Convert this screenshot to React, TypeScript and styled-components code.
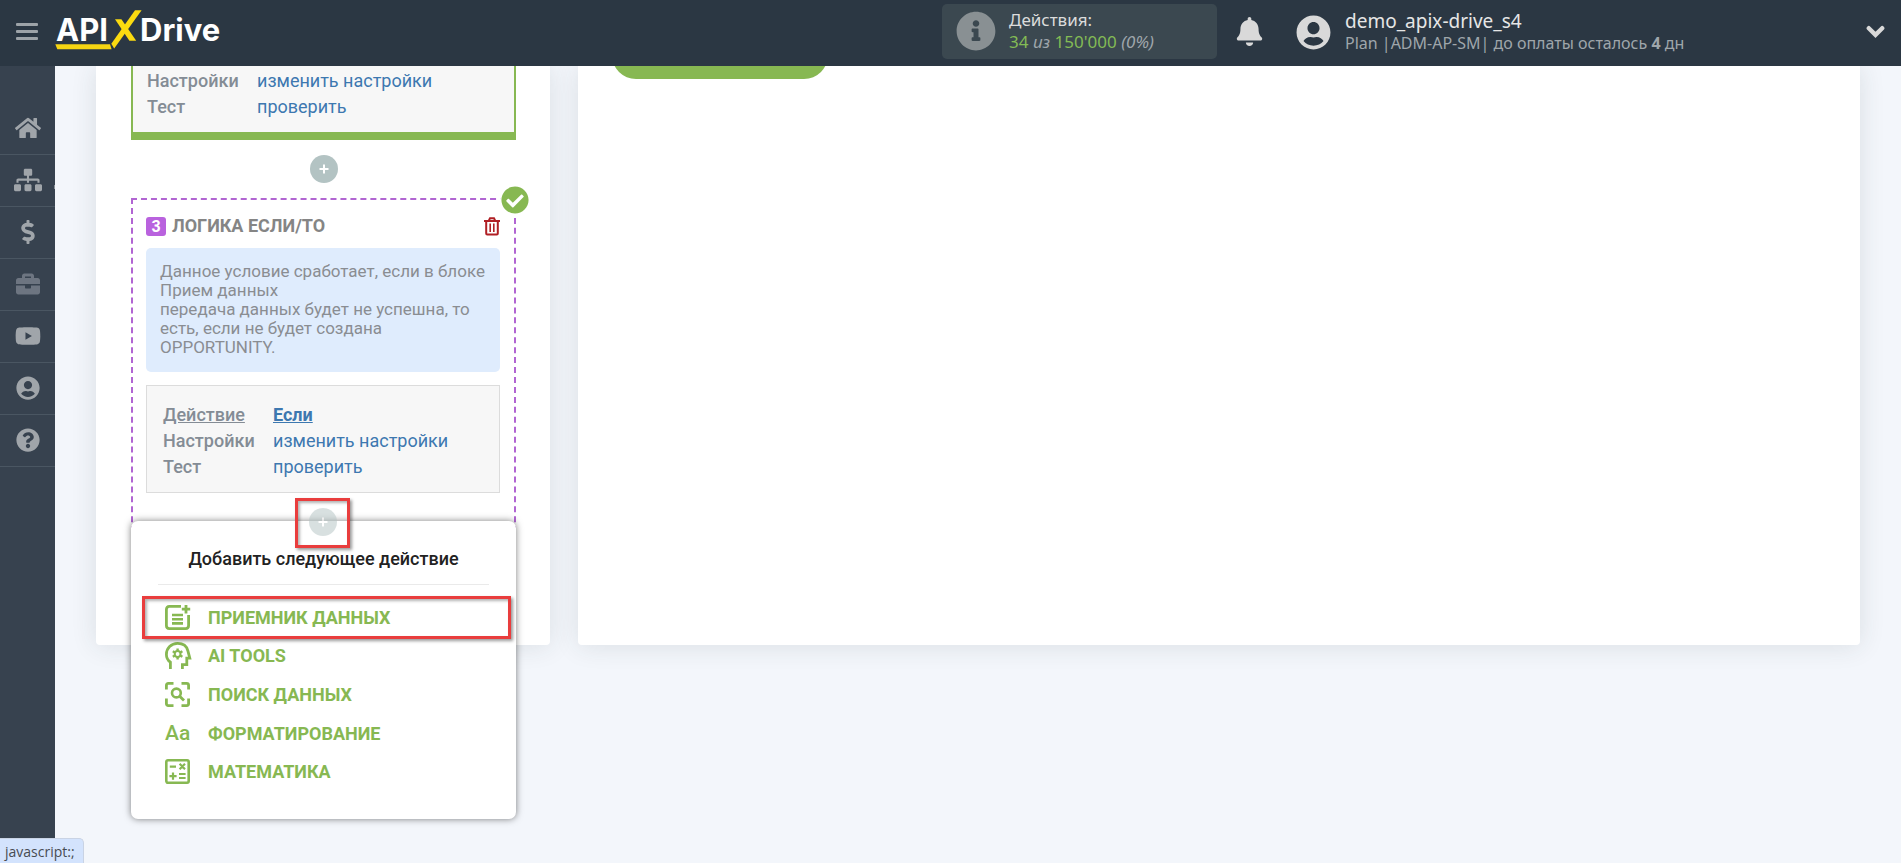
import React from 'react';
import styled, { createGlobalStyle, css } from 'styled-components';
import {
  FaHome, FaSitemap, FaDollarSign, FaBriefcase, FaYoutube, FaUserCircle,
  FaQuestionCircle, FaInfoCircle, FaBell, FaCheckCircle,
} from 'react-icons/fa';

const green = '#87b852';
const linkBlue = '#3d78b0';
const purple = '#b165d2';

const GlobalStyle = createGlobalStyle`
  *, *::before, *::after { box-sizing: border-box; }
  body { margin: 0; background: #f3f6fb; font-family: Roboto, "Liberation Sans", sans-serif; }
  button { font: inherit; border: 0; padding: 0; margin: 0; background: none; cursor: pointer; }
  a { color: inherit; text-decoration: none; }
  h2, h3, p, ul, dl, dd, dt { margin: 0; padding: 0; }
  svg { display: block; flex: none; }
`;

const Page = styled.div`
  min-height: 100vh;
  display: flex;
  flex-direction: column;
`;

/* ---------- top bar ---------- */
const TopBar = styled.header`
  height: 66px;
  flex: none;
  display: flex;
  align-items: center;
  background: #2b3743;
  padding: 0 16px 3px;
  font-family: "Noto Sans", "Open Sans", sans-serif;
  color: #dcdcdc;
`;
const MenuButton = styled.button`
  color: #9da3a8;
  width: 22px;
  height: 24px;
  display: flex;
  flex-direction: column;
  justify-content: center;
  gap: 4px;
`;
const MenuLine = styled.span`
  height: 3px;
  border-radius: 1px;
  background: currentColor;
`;
const LogoLink = styled.a`
  margin-left: 16px;
`;
const TopRight = styled.div`
  margin-left: auto;
  flex: 0 0 943px;
  display: flex;
  align-items: center;
`;
const ActionsBox = styled.div`
  width: 275px;
  height: 55px;
  border-radius: 5px;
  background: #3b4850;
  display: flex;
  align-items: center;
  gap: 13px;
  padding: 0 14px 2px;
`;
const TwoLines = styled.div`
  display: flex;
  flex-direction: column;
  white-space: nowrap;
  line-height: 22px;
`;
const ActionsLabel = styled.div`
  font-size: 17px;
`;
const ActionsCount = styled.div`
  font-size: 17px;
  color: #9fa6ab;
`;
const UserName = styled.div`
  font-size: 19px;
`;
const UserPlan = styled.div`
  font-size: 16px;
  color: #9fa6ab;
`;
const GreenNum = styled.span`
  color: #83bb55;
`;
const IconButton = styled.button`
  margin-left: 18px;
  color: #d9d9d9;
`;
const ExpandButton = styled(IconButton)`
  margin-left: auto;
`;
const User = styled.a`
  margin-left: 32px;
  padding-top: 1px;
  display: flex;
  align-items: center;
  gap: 14px;
  color: #e6e6e6;
`;

/* ---------- body ---------- */
const Body = styled.div`
  flex: 1;
  display: flex;
`;
const SideBar = styled.nav`
  width: 55px;
  flex: none;
  background: #37424f;
  padding-top: 37px;
`;
const SideItem = styled.a<{ $dim?: boolean; $more?: boolean }>`
  position: relative;
  height: 52px;
  padding-bottom: 2px;
  display: flex;
  align-items: center;
  justify-content: center;
  border-bottom: 1px solid #4a5662;
  color: ${p => (p.$dim ? '#6d7581' : '#a0a5aa')};
  ${p => p.$more && css`
    &::after {
      content: '';
      position: absolute;
      right: 0;
      top: 30px;
      width: 1px;
      height: 4px;
      background: #8b9298;
    }
  `}
`;
const Main = styled.main`
  flex: 1;
  display: flex;
  align-items: flex-start;
  gap: 28px;
  padding: 0 41px;
  overflow: hidden;
`;
const cardLook = css`
  background: #fff;
  border-radius: 0 0 4px 4px;
  box-shadow: 0 1px 26px rgba(40, 60, 60, 0.12);
  min-height: 579px;
`;
const StepsCard = styled.section`
  ${cardLook}
  flex: 0 0 454px;
  padding: 0 34px 0 35px;
`;
const WorkCard = styled.section`
  ${cardLook}
  flex: 1;
  padding: 0 34px;
`;
const ButtonClip = styled.div`
  height: 13px;
  overflow: hidden;
  display: flex;
  align-items: flex-end;
`;
const PillButton = styled.button`
  flex: none;
  width: 216px;
  height: 48px;
  border-radius: 24px;
  background: ${green};
`;

const DoneStep = styled.div`
  background: #f7f7f7;
  border: solid ${green};
  border-width: 0 2px 8px;
  padding: 2px 14px 12px;
`;
const Rows = styled.dl`
  font-size: 18px;
  line-height: 26px;
`;
const Row = styled.div<{ $active?: boolean }>`
  display: flex;
  dt {
    width: 110px;
    color: #848c95;
    font-weight: 500;
  }
  dd { color: ${linkBlue}; }
  ${p => p.$active && css`
    dt, a { text-decoration: underline; }
    dd { font-weight: 700; }
  `}
`;
const Connector = styled.div`
  height: 58px;
  display: flex;
  align-items: center;
  justify-content: center;
`;
const PlusButton = styled.button<{ $faded?: boolean }>`
  width: 28px;
  height: 28px;
  border-radius: 50%;
  background: #b3c3c3;
  color: #fff;
  display: flex;
  align-items: center;
  justify-content: center;
  ${p => p.$faded && css`
    position: relative;
    z-index: 2;
    opacity: 0.5;
  `}
`;
const LogicStep = styled.div`
  position: relative;
  border: 2px dashed ${purple};
  padding: 16px 14px 24px 13px;
`;
const DoneMark = styled.span`
  position: absolute;
  top: -15px;
  right: -16px;
  width: 30px;
  height: 30px;
  border-radius: 50%;
  background: #fff;
  color: ${green};
  display: flex;
  align-items: center;
  justify-content: center;
`;
const StepHead = styled.div`
  display: flex;
  align-items: center;
  height: 20px;
  margin-bottom: 12px;
`;
const StepNo = styled.span`
  width: 20px;
  height: 19px;
  border-radius: 3px;
  background: #b962de;
  color: #fff;
  font-size: 16px;
  line-height: 19px;
  font-weight: 700;
  text-align: center;
`;
const StepTitle = styled.h2`
  flex: 1;
  margin-left: 6px;
  font-size: 18px;
  line-height: 22px;
  font-weight: 700;
  color: #858585;
`;
const TrashButton = styled.button`
  color: #b01f24;
`;
const Note = styled.p`
  background: #dfecfd;
  border-radius: 5px;
  padding: 14px 15px 15px 14px;
  font-size: 17px;
  line-height: 19px;
  color: #8a8d92;
`;
const StepParams = styled.div`
  margin-top: 13px;
  background: #f7f7f7;
  border: 1px solid #dcdcdc;
  padding: 16px 16px 12px;
`;
const AddStep = styled.div`
  position: relative;
  margin-top: 15px;
  display: flex;
  justify-content: center;
`;
const Popup = styled.div`
  position: absolute;
  z-index: 1;
  top: 13px;
  left: -15px;
  right: -16px;
  background: #fff;
  border-radius: 7px;
  box-shadow: 0 0 7px rgba(0, 0, 0, 0.5);
  padding: 27px 27px 28px;
`;
const PopupTitle = styled.h3`
  font-size: 18px;
  line-height: 22px;
  font-weight: 500;
  text-align: center;
  color: #222;
  padding-bottom: 14px;
  border-bottom: 1px solid #eaeaea;
`;
const PopupList = styled.ul`
  list-style: none;
  height: 193px;
  margin-top: 13px;
  display: flex;
  flex-direction: column;
`;
const PopupItem = styled.li`
  flex: 1;
  display: flex;
`;
const PopupLink = styled.a`
  flex: 1;
  display: flex;
  align-items: center;
  gap: 16px;
  padding-left: 7px;
  font-size: 18px;
  font-weight: 700;
  color: ${green};
`;
const AaIcon = styled.span`
  width: 27px;
  font-size: 21px;
  line-height: 24px;
  font-weight: 500;
`;
const Highlight = styled.span<{ $kind: 'plus' | 'item' }>`
  position: absolute;
  z-index: 3;
  border: 3px solid #e93d3d;
  box-shadow: 2px 2px 3px rgba(0, 0, 0, 0.4), inset 2px 2px 3px rgba(0, 0, 0, 0.3);
  pointer-events: none;
  ${p => p.$kind === 'plus'
    ? css`top: -10px; left: 149px; width: 55px; height: 50px;`
    : css`top: 75px; left: 11px; right: 5px; height: 43px;`}
`;
const StatusBubble = styled.div`
  position: fixed;
  left: 0;
  bottom: 0;
  height: 25px;
  padding: 0 8px 0 5px;
  border: solid #c9d3e4;
  border-width: 1px 1px 0 0;
  border-radius: 0 5px 0 0;
  background: #d3e3fd;
  color: #474b52;
  font: 14px/25px "Open Sans", "Noto Sans", sans-serif;
`;

/* ---------- drawings ---------- */
const Logo = () => (
  <svg width="170" height="53" viewBox="0 0 170 53" role="img" aria-label="ApiX-Drive">
    <g fontFamily="Inter, sans-serif" fontWeight="700" fontSize="31" fill="#fff">
      <text x="2" y="36">API</text>
      <text x="86" y="36">Drive</text>
    </g>
    <path d="M1.3 39.3H56L57.6 44.3H3.3Z" fill="#f6d512" />
    <path d="M81 5.3H87.6L60.2 43.4L57.3 38.8Z" fill="#fbdb10" />
    <path d="M61 14.3H67.4L82.2 35.8H75.4Z" fill="#fbdb10" />
  </svg>
);
const ChevronIcon = () => (
  <svg width="19" height="13" viewBox="0 0 19 13" fill="none" stroke="currentColor" strokeWidth="4.4" strokeLinecap="round">
    <path d="M2.8 3.2L9.5 9.8L16.2 3.2" />
  </svg>
);
const PlusIcon = () => (
  <svg width="10" height="10" viewBox="0 0 10 10" stroke="currentColor" strokeWidth="2">
    <path d="M5 0.5V9.5M0.5 5H9.5" />
  </svg>
);
const TrashIcon = () => (
  <svg width="16" height="19" viewBox="0 0 16 19" fill="none" stroke="currentColor" strokeWidth="2">
    <path d="M0 4H16M2.2 4V16.6Q2.2 17.6 3.2 17.6H12.8Q13.8 17.6 13.8 16.6V4M4.8 3.6L6 1.2H10L11.2 3.6" />
    <path d="M6.2 6.5V15M9.8 6.5V15" strokeWidth="1.6" />
  </svg>
);
const ItemIcon = ({ children }: { children: React.ReactNode }) => (
  <svg width="27" height="27" viewBox="0 0 27 27" fill="none" stroke="currentColor" strokeWidth="2.8">
    {children}
  </svg>
);
const ReceiverIcon = () => (
  <ItemIcon>
    <path d="M16 2.4H4.4Q1.4 2.4 1.4 5.4V21.6Q1.4 24.6 4.4 24.6H20.6Q23.6 24.6 23.6 21.6V11" />
    <path d="M7 11H18M7 15.2H18M7 19.4H18" strokeWidth="2.6" />
    <path d="M21 1V9.6M16.8 5.2H25.2" strokeWidth="2.8" />
  </ItemIcon>
);
const HeadIcon = () => (
  <ItemIcon>
    <path d="M5.4 27V20.2C3 18.4 1.4 15.8 1.4 12.4C1.4 6.2 6.2 1.4 12.6 1.4C18 1.4 21.8 4.4 22.9 8.8L24.8 16.2H21.8V22.6H17.4V27" />
    <circle cx="12.6" cy="12" r="2.9" strokeWidth="2" />
    <path
      d="M12.6 9V6.4M12.6 15V17.6M15.2 10.5L17.4 9.2M15.2 13.5L17.4 14.8M10 10.5L7.8 9.2M10 13.5L7.8 14.8"
      strokeWidth="2.4"
    />
  </ItemIcon>
);
const SearchIcon = () => (
  <ItemIcon>
    <path d="M1.4 8.5V4.4Q1.4 2.4 3.4 2.4H8.5M16.5 2.4H21.6Q23.6 2.4 23.6 4.4V8.5M23.6 17.5V22.6Q23.6 24.6 21.6 24.6H16.5M8.5 24.6H3.4Q1.4 24.6 1.4 22.6V17.5" />
    <circle cx="11.4" cy="12" r="4.4" strokeWidth="2.6" />
    <path d="M14.4 15L19 19.6" strokeWidth="2.8" />
  </ItemIcon>
);
const MathIcon = () => (
  <ItemIcon>
    <rect x="1.3" y="2.3" width="22.4" height="22.4" rx="1.6" strokeWidth="2.6" />
    <path
      d="M4.8 8.6H11M14.6 5.8L20 11.2M20 5.8L14.6 11.2M8 14.6V21.8M4.4 18.2H11.6M14 16H20.6M14 20H20.6"
      strokeWidth="2.2"
    />
  </ItemIcon>
);

const sideItems = [
  { label: 'Главная', icon: <FaHome size={26} /> },
  { label: 'Связи', icon: <FaSitemap size={28} />, more: true },
  { label: 'Оплата', icon: <FaDollarSign size={24} /> },
  { label: 'Проекты', icon: <FaBriefcase size={24} />, dim: true },
  { label: 'Видео', icon: <FaYoutube size={26} /> },
  { label: 'Профиль', icon: <FaUserCircle size={24} /> },
  { label: 'Помощь', icon: <FaQuestionCircle size={24} /> },
];

const nextActions = [
  { title: 'ПРИЕМНИК ДАННЫХ', icon: <ReceiverIcon /> },
  { title: 'AI TOOLS', icon: <HeadIcon /> },
  { title: 'ПОИСК ДАННЫХ', icon: <SearchIcon /> },
  { title: 'ФОРМАТИРОВАНИЕ', icon: <AaIcon aria-hidden>Aa</AaIcon> },
  { title: 'МАТЕМАТИКА', icon: <MathIcon /> },
];

const ParamRow = ({ name, value, active }: { name: string; value: string; active?: boolean }) => (
  <Row $active={active}>
    <dt>{name}</dt>
    <dd><a href="#step">{value}</a></dd>
  </Row>
);

export default function App() {
  return (
    <Page>
      <GlobalStyle />
      <TopBar>
        <MenuButton aria-label="Меню"><MenuLine /><MenuLine /><MenuLine /></MenuButton>
        <LogoLink href="#home"><Logo /></LogoLink>
        <TopRight>
          <ActionsBox>
            <FaInfoCircle size={40} color="#899093" />
            <TwoLines>
              <ActionsLabel>Действия:</ActionsLabel>
              <ActionsCount>
                <GreenNum>34</GreenNum> <i>из</i> <GreenNum>150'000</GreenNum> <i>(0%)</i>
              </ActionsCount>
            </TwoLines>
          </ActionsBox>
          <IconButton aria-label="Уведомления"><FaBell size={29} /></IconButton>
          <User href="#user">
            <FaUserCircle size={35} color="#d9d9d9" />
            <TwoLines>
              <UserName>demo_apix-drive_s4</UserName>
              <UserPlan>Plan |ADM-AP-SM| до оплаты осталось <b>4</b> дн</UserPlan>
            </TwoLines>
          </User>
          <ExpandButton aria-label="Развернуть"><ChevronIcon /></ExpandButton>
        </TopRight>
      </TopBar>
      <Body>
        <SideBar>
          {sideItems.map(i => (
            <SideItem key={i.label} href="#nav" aria-label={i.label} $dim={i.dim} $more={i.more}>
              {i.icon}
            </SideItem>
          ))}
        </SideBar>
        <Main>
          <StepsCard>
            <DoneStep>
              <Rows>
                <ParamRow name="Настройки" value="изменить настройки" />
                <ParamRow name="Тест" value="проверить" />
              </Rows>
            </DoneStep>
            <Connector>
              <PlusButton aria-label="Добавить действие"><PlusIcon /></PlusButton>
            </Connector>
            <LogicStep>
              <DoneMark><FaCheckCircle size={28} /></DoneMark>
              <StepHead>
                <StepNo>3</StepNo>
                <StepTitle>ЛОГИКА ЕСЛИ/ТО</StepTitle>
                <TrashButton aria-label="Удалить"><TrashIcon /></TrashButton>
              </StepHead>
              <Note>
                Данное условие сработает, если в блоке Прием данных<br />
                передача данных будет не успешна, то есть, если не будет создана OPPORTUNITY.
              </Note>
              <StepParams>
                <Rows>
                  <ParamRow name="Действие" value="Если" active />
                  <ParamRow name="Настройки" value="изменить настройки" />
                  <ParamRow name="Тест" value="проверить" />
                </Rows>
              </StepParams>
              <AddStep>
                <PlusButton $faded aria-label="Добавить действие"><PlusIcon /></PlusButton>
                <Highlight $kind="plus" />
                <Popup>
                  <PopupTitle>Добавить следующее действие</PopupTitle>
                  <PopupList>
                    {nextActions.map(a => (
                      <PopupItem key={a.title}>
                        <PopupLink href="#add">{a.icon}{a.title}</PopupLink>
                      </PopupItem>
                    ))}
                  </PopupList>
                  <Highlight $kind="item" />
                </Popup>
              </AddStep>
            </LogicStep>
          </StepsCard>
          <WorkCard>
            <ButtonClip><PillButton aria-label="Продолжить" /></ButtonClip>
          </WorkCard>
        </Main>
      </Body>
      <StatusBubble>javascript:;</StatusBubble>
    </Page>
  );
}
